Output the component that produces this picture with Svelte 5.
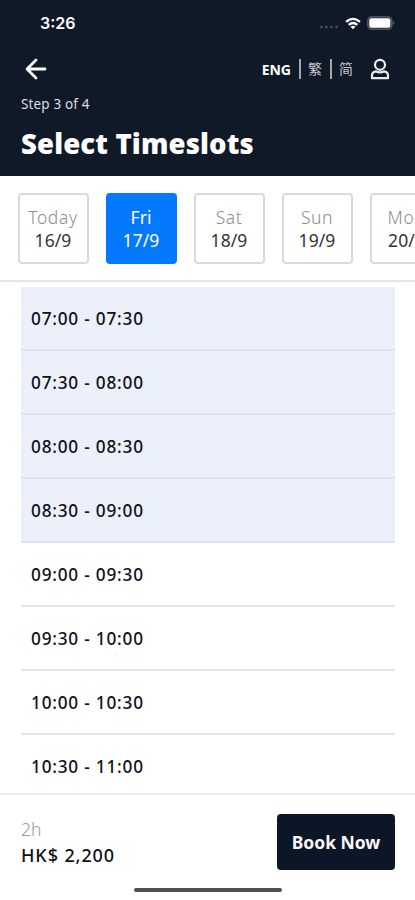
<script>
    let dates = [
        { day: "Today", date: "16/9" },
        { day: "Fri", date: "17/9" },
        { day: "Sat", date: "18/9" },
        { day: "Sun", date: "19/9" },
        { day: "Mon", date: "20/9" },
    ];

    let slots = [
        "07:00 - 07:30",
        "07:30 - 08:00",
        "08:00 - 08:30",
        "08:30 - 09:00",
        "09:00 - 09:30",
        "09:30 - 10:00",
        "10:00 - 10:30",
        "10:30 - 11:00",
    ];

    let activeDate = $state("17/9");
    let selected = $state(slots.slice(0, 4));

    function toggle(slot) {
        selected = selected.includes(slot)
            ? selected.filter((s) => s !== slot)
            : [...selected, slot];
    }
</script>

<div class="screen">
    <header>
        <div class="status">
            <span class="clock">3:26</span>
            <div class="signals">
                <svg width="20" height="4" viewBox="0 0 20 4" fill="#4d5562">
                    <circle cx="2.4" cy="2" r="1.3" />
                    <circle cx="7.4" cy="2" r="1.3" />
                    <circle cx="12.4" cy="2" r="1.3" />
                    <circle cx="17.4" cy="2" r="1.3" />
                </svg>
                <svg class="wifi" width="16" height="13" viewBox="0 0 18 14" fill="none" stroke="#fff" stroke-width="2.6">
                    <path d="M1.2 5.2Q9 -1.6 16.8 5.2" />
                    <path d="M4.2 8.5Q9 4.2 13.8 8.5" />
                    <path d="M9 13.4L6.2 10.6Q9 8.2 11.8 10.6Z" fill="#fff" stroke="none" />
                </svg>
                <svg class="battery" width="28" height="14" viewBox="0 0 28 14">
                    <rect x="0.8" y="0.8" width="24" height="12.4" rx="3.6" fill="none" stroke="#5f6671" stroke-width="1.2" />
                    <rect x="2.2" y="2.2" width="21.2" height="9.6" rx="2" fill="#fff" />
                    <path d="M26 4.8Q27.8 7 26 9.2Z" fill="#858b94" />
                </svg>
            </div>
        </div>

        <div class="nav">
            <button class="back" aria-label="Back">
                <svg width="22" height="22" viewBox="0 0 22 22" fill="none" stroke="#fff" stroke-width="2.8" stroke-linecap="round" stroke-linejoin="round">
                    <path d="M20 11H2.4M11 2L2 11L11 20" />
                </svg>
            </button>
            <div class="langs">
                <span class="eng">ENG</span>
                <i></i>
                <span class="han">繁</span>
                <i></i>
                <span class="han">简</span>
            </div>
            <svg class="user" width="20" height="22" viewBox="0 0 20 22" fill="none" stroke="#e9eaeb" stroke-width="2.2" stroke-linejoin="round">
                <circle cx="10" cy="6.8" r="5" />
                <path d="M5.6 13.3Q2 14 2 17.6V20.2H18V17.6Q18 14 14.4 13.3Q10 15.6 5.6 13.3Z" />
            </svg>
        </div>

        <p class="step">Step 3 of 4</p>
        <h1>Select Timeslots</h1>
    </header>

    <div class="dates">
        {#each dates as d}
            <button class="date" class:active={d.date === activeDate} onclick={() => (activeDate = d.date)}>
                <span class="day">{d.day}</span>
                <span class="num">{d.date}</span>
            </button>
        {/each}
    </div>

    <div class="slots">
        {#each slots as slot}
            <button class="slot" class:selected={selected.includes(slot)} onclick={() => toggle(slot)}>{slot}</button>
        {/each}
    </div>

    <footer>
        <div class="summary">
            <div class="total">
                <span class="hours">2h</span>
                <span class="price">HK$ 2,200</span>
            </div>
            <button class="book">Book Now</button>
        </div>
        <div class="home"></div>
    </footer>
</div>

<style>
    :global(body) {
        margin: 0;
        background: #fff;
    }

    .screen {
        width: 415px;
        height: 900px;
        display: flex;
        flex-direction: column;
        overflow: hidden;
        background: #fff;
        color: #101114;
        font-family: "Noto Sans", "Noto Sans CJK TC", sans-serif;
    }

    button {
        margin: 0;
        padding: 0;
        border: none;
        background: none;
        color: inherit;
        font: inherit;
        cursor: pointer;
    }

    svg {
        display: block;
        flex: none;
    }

    header {
        flex: none;
        height: 176px;
        box-sizing: border-box;
        padding: 12px 20px 0;
        background: #101928;
        color: #fff;
    }

    .status {
        display: flex;
        justify-content: space-between;
        height: 22px;
        padding-left: 20px;
    }

    .clock {
        font-family: Inter, sans-serif;
        font-size: 16px;
        font-weight: 600;
        line-height: 22px;
    }

    .signals {
        display: flex;
        align-items: center;
    }

    .signals svg:first-child {
        margin: 8px 6px 0 0;
    }

    .wifi {
        margin-right: 6px;
    }

    .nav {
        display: flex;
        align-items: center;
        height: 24px;
        margin-top: 23px;
    }

    .back {
        margin-left: 5px;
    }

    .langs {
        display: flex;
        align-items: center;
        margin-left: auto;
        gap: 7.5px;
    }

    .langs i {
        width: 2px;
        height: 20px;
        background: #a3a6ab;
    }

    .eng {
        font-size: 14px;
        font-weight: 700;
    }

    .han {
        width: 14px;
        margin-top: -2px;
        color: #c4c6c9;
        font-family: "Noto Sans CJK SC", sans-serif;
        font-size: 14px;
        line-height: 18px;
    }

    .user {
        margin: 0 5px 0 17px;
    }

    .step {
        margin: 13px 0 0 1px;
        color: #dcdee0;
        font-size: 13.5px;
        letter-spacing: 0.15px;
        line-height: 20px;
    }

    h1 {
        margin: 10px 0 0 1px;
        font-size: 27.5px;
        font-weight: 900;
        letter-spacing: 0.15px;
        line-height: 40px;
        white-space: nowrap;
    }

    .dates {
        flex: none;
        display: flex;
        gap: 17px;
        height: 106px;
        box-sizing: border-box;
        padding: 17px 0 0 17.5px;
        border-bottom: 2px solid #e6e6e8;
        overflow: hidden;
    }

    .date {
        flex: none;
        display: flex;
        flex-direction: column;
        align-items: center;
        justify-content: center;
        width: 71px;
        height: 71px;
        box-sizing: border-box;
        padding-top: 1px;
        border: 2px solid #d9d9dc;
        border-radius: 4px;
        font-size: 17.5px;
        line-height: 23px;
    }

    .date:last-child {
        padding-left: 3px;
    }

    .day {
        color: #8c8d8f;
        font-weight: 300;
        letter-spacing: 0.6px;
    }

    .num {
        color: #333436;
        letter-spacing: 0.1px;
    }

    .date.active {
        border-color: #0579fd;
        background: #0579fd;
    }

    .active .day,
    .active .num {
        color: #fff;
        font-weight: 400;
    }

    .active .day {
        letter-spacing: 0;
    }

    .slots {
        flex: 1;
        min-height: 0;
        display: flex;
        flex-direction: column;
        padding: 5px 20px 0 21px;
        overflow: hidden;
    }

    .slot {
        flex: none;
        height: 64px;
        box-sizing: border-box;
        padding: 1px 0 0 10px;
        border-bottom: 2px solid #e6e7e9;
        font-size: 17.2px;
        font-weight: 500;
        letter-spacing: 0.8px;
        text-align: left;
    }

    .slot.selected {
        border-color: #e0e3ea;
        background: #ecf0fa;
    }

    footer {
        flex: none;
        height: 107px;
        box-sizing: border-box;
        border-top: 2px solid #ebebed;
    }

    .summary {
        display: flex;
        justify-content: space-between;
        padding: 19px 20px 0 21px;
    }

    .total {
        display: flex;
        flex-direction: column;
        padding-top: 2px;
        font-size: 17.5px;
        line-height: 26px;
    }

    .hours {
        color: #999a9c;
        font-weight: 300;
    }

    .price {
        font-size: 18px;
        font-weight: 500;
        letter-spacing: 0.9px;
    }

    .book {
        width: 118px;
        height: 56px;
        border-radius: 4px;
        background: #0d1626;
        color: #f7f7f8;
        font-size: 17.5px;
        font-weight: 700;
    }

    .home {
        width: 148px;
        height: 4px;
        margin: 18px 0 0 134px;
        border-radius: 2px;
        background: #505052;
    }
</style>
